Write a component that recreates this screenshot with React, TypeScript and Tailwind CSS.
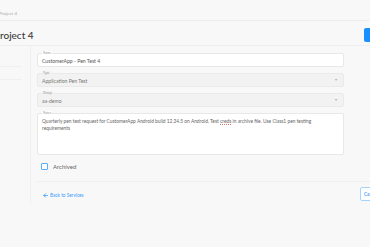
import React from "react";

function Field({ label, value, select, white }: { label: string; value: string; select?: boolean; white?: boolean }) {
  return (
    <div
      className={`relative h-[14px] rounded-[2px] border flex items-center pl-[4px] pr-[6px] ${
        white ? "bg-white border-[#e8e8e8]" : "bg-[#f2f2f2] border-[#eaeaea]"
      }`}
    >
      <span
        className={`absolute left-[4px] top-[-3px] px-[1px] text-[3.2px] leading-[4px] text-[#9a9a9a] ${
          white ? "bg-white" : "bg-[#f2f2f2]"
        }`}
      >
        {label}
      </span>
      <span className={`flex-1 text-[5.1px] leading-[6px] pt-[2px] ${white ? "text-[#555]" : "text-[#777]"}`}>{value}</span>
      {select && <span className="text-[4px] leading-none text-[#aaa]">▾</span>}
    </div>
  );
}

export default function App() {
  return (
    <div className="w-[370px] h-[247px] overflow-hidden bg-[#f8f8f8] font-['Lato',sans-serif]">
      <div className="h-[21px] border-b border-[#eeeeee] flex items-end pb-[4px]">
        <span className="ml-[-1px] text-[4.6px] leading-[5px] text-[#aaaaaa]">Project 4</span>
      </div>
      <div className="h-[25px] border-b border-[#eeeeee] flex items-end justify-between pb-[3px]">
        <h1 className="ml-[-6px] text-[10px] leading-[13px] text-[#3a3a3a] font-medium">Project 4</h1>
        <div className="w-[24px] h-[14px] mr-[-18px] rounded-[2px] bg-[#1a8fff]"></div>
      </div>
      <div className="flex">
        <div className="w-[31px] h-[157px] border-r border-[#f0f0f0] pt-[20px]">
          <div className="w-[22px] h-[14px] border-t border-b border-[#f0f0f0]"></div>
        </div>
        <div className="flex-1 pl-[6px] pt-[7px]">
          <div className="w-[307px] flex flex-col gap-[6px]">
            <Field label="Name" value="CustomerApp - Pen Test 4" white />
            <Field label="Type" value="Application Pen Test" select />
            <Field label="Group" value="aa-demo" select />
            <div className="relative h-[42px] rounded-[2px] border border-[#e8e8e8] bg-white pl-[4px] pr-[10px] pt-[4px]">
              <span className="absolute left-[4px] top-[-3px] px-[1px] text-[3.2px] leading-[4px] text-[#9a9a9a] bg-white">
                Notes
              </span>
              <p className="text-[4.85px] leading-[7px] text-[#666]">
                Quarterly pen test request for CustomerApp Android build 12.34.5 on Android. Test{" "}
                <span className="underline decoration-dotted decoration-[#e27070] decoration-[0.6px] underline-offset-[1px]">creds</span> in
                archive file. Use Class1 pen testing requirements
              </p>
            </div>
          </div>
          <div className="h-[26px] flex items-center pl-[4px] gap-[5px] pb-[3px]">
            <div className="w-[7px] h-[7px] rounded-[1px] border-[1.2px] border-[#5ab0ff] bg-white"></div>
            <span className="text-[6px] leading-[7px] text-[#666]">Archived</span>
          </div>
          <div className="h-[22px] border-t border-[#f0f0f0] flex items-start justify-between">
            <div className="flex items-center gap-[2px] pl-[6px] pt-[11px] text-[#3c9bff]">
              <svg width="5" height="5" viewBox="0 0 10 10" fill="none" stroke="#3c9bff" strokeWidth="1.6" strokeLinecap="round" strokeLinejoin="round">
                <path d="M9 5H1.5M5 1.5L1.5 5L5 8.5" />
              </svg>
              <span className="text-[4.7px] leading-[5px]">Back to Services</span>
            </div>
            <div className="mr-[-20px] mt-[5px] w-[30px] h-[14px] rounded-[2px] border border-[#a9d3ff] bg-white flex items-center pl-[3px]">
              <span className="text-[4.7px] leading-[5px] text-[#3c9bff] font-semibold">Cancel</span>
            </div>
          </div>
        </div>
      </div>
    </div>
  );
}
